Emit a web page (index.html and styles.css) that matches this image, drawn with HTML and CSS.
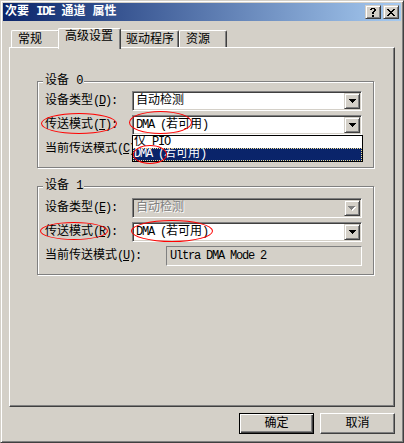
FILE: index.html
```html
<!DOCTYPE html>
<html>
<head>
<meta charset="utf-8">
<link rel="stylesheet" href="styles.css">
</head>
<body>
<div class="window">
  <div class="titlebar">
    <span class="title">次要 <span class="lat">IDE</span> 通道 属性</span>
    <div class="caption-btns">
      <span class="cbtn"><svg width="6" height="9" viewBox="0 0 6 9" shape-rendering="crispEdges"><path d="M1 0h4v1H1zM0 1h2v1H0zM4 1h2v2H4zM3 3h2v1H3zM2 4h2v2H2zM2 7h2v2H2z" fill="#000"/></svg></span>
      <span class="cbtn"><svg width="8" height="7" viewBox="0 0 8 7" shape-rendering="crispEdges"><path d="M0 0h2v1H0zM6 0h2v1H6zM1 1h2v1H1zM5 1h2v1H5zM2 2h4v1H2zM3 3h2v1H3zM2 4h4v1H2zM1 5h2v1H1zM5 5h2v1H5zM0 6h2v1H0zM6 6h2v1H6z" fill="#000"/></svg></span>
    </div>
  </div>

  <div class="tabs">
    <div class="tab t1">常规</div>
    <div class="tab t2 active">高级设置</div>
    <div class="tab t3">驱动程序</div>
    <div class="tab t4">资源</div>
  </div>

  <div class="panel">
    <div class="group g0">
      <div class="group-title">设备 <span class="lat">0</span></div>
      <div class="row first">
        <span class="label">设备类型<span class="lat">(<u>D</u>):</span></span>
        <div class="combo">
          <span class="combo-text">自动检测</span>
          <span class="combo-btn"><svg width="7" height="4" viewBox="0 0 7 4" shape-rendering="crispEdges"><path d="M0 0h7v1H0zM1 1h5v1H1zM2 2h3v1H2zM3 3h1v1H3z" fill="#000"/></svg></span>
        </div>
      </div>
      <div class="row">
        <span class="label">传送模式<span class="lat">(<u>T</u>):</span></span>
        <div class="combo open">
          <span class="combo-text"><span class="lat">DMA (</span>若可用<span class="lat">)</span></span>
          <span class="combo-btn"><svg width="7" height="4" viewBox="0 0 7 4" shape-rendering="crispEdges"><path d="M0 0h7v1H0zM1 1h5v1H1zM2 2h3v1H2zM3 3h1v1H3z" fill="#000"/></svg></span>
          <div class="droplist">
            <div class="item">仅<span class="lat"> PIO</span></div>
            <div class="item selected"><span class="lat">DMA (</span>若可用<span class="lat">)</span></div>
          </div>
        </div>
      </div>
      <div class="row">
        <span class="label clipped">当前传送模式<span class="lat">(<u>C</u>):</span></span>
        <div class="field"></div>
      </div>
    </div>

    <div class="group g1">
      <div class="group-title">设备 <span class="lat">1</span></div>
      <div class="row first">
        <span class="label">设备类型<span class="lat">(<u>E</u>):</span></span>
        <div class="combo disabled">
          <span class="combo-text">自动检测</span>
          <span class="combo-btn"><svg width="8" height="5" viewBox="0 0 8 5" shape-rendering="crispEdges"><path d="M1 1h7v1H1zM2 2h5v1H2zM3 3h3v1H3zM4 4h1v1H4z" fill="#fff"/><path d="M0 0h7v1H0zM1 1h5v1H1zM2 2h3v1H2zM3 3h1v1H3z" fill="#808080"/></svg></span>
        </div>
      </div>
      <div class="row">
        <span class="label">传送模式<span class="lat">(<u>R</u>):</span></span>
        <div class="combo">
          <span class="combo-text"><span class="lat">DMA (</span>若可用<span class="lat">)</span></span>
          <span class="combo-btn"><svg width="7" height="4" viewBox="0 0 7 4" shape-rendering="crispEdges"><path d="M0 0h7v1H0zM1 1h5v1H1zM2 2h3v1H2zM3 3h1v1H3z" fill="#000"/></svg></span>
        </div>
      </div>
      <div class="row">
        <span class="label">当前传送模式<span class="lat">(<u>U</u>):</span></span>
        <div class="field"><span class="lat">Ultra DMA Mode 2</span></div>
      </div>
    </div>
  </div>

  <div class="buttons">
    <div class="btn default">确定</div>
    <div class="btn">取消</div>
  </div>

  <div class="ell e1"></div>
  <div class="ell e2"></div>
  <div class="ell e3"></div>
  <div class="ell e4"></div>
  <div class="ell e5"></div>
</div>
</body>
</html>
```

FILE: styles.css
```css
* { box-sizing: border-box; }

html, body {
  margin: 0;
  padding: 0;
  background: #D4D0C8;
}

body {
  font-family: "Liberation Mono", "Noto Sans CJK SC", monospace;
  font-size: 12px;
  line-height: 14px;
  color: #000;
}

.lat { letter-spacing: -1.2px; }
u { text-decoration: underline; }

.window {
  position: relative;
  width: 404px;
  height: 443px;
  border: 1px solid;
  border-color: #D4D0C8 #404040 #404040 #D4D0C8;
  box-shadow: inset 1px 1px #fff, inset -1px -1px #808080;
  padding: 2px;
  display: flex;
  flex-direction: column;
  background: #D4D0C8;
  overflow: hidden;
}

/* title bar */
.titlebar {
  flex: none;
  height: 18px;
  display: flex;
  align-items: center;
  justify-content: space-between;
  padding: 0 2px;
  background: linear-gradient(to right, #0A246A, #A6CAF0);
}
.title {
  color: #fff;
  font-weight: bold;
  white-space: pre;
}
.caption-btns { display: flex; gap: 2px; }
.cbtn {
  width: 16px;
  height: 14px;
  background: #D4D0C8;
  border: 1px solid;
  border-color: #D4D0C8 #404040 #404040 #D4D0C8;
  box-shadow: inset 1px 1px #fff, inset -1px -1px #808080;
  display: flex;
  align-items: center;
  justify-content: center;
}
.cbtn svg { display: block; }

/* tabs */
.tabs {
  flex: none;
  height: 19px;
  margin: 7px 6px 0;
  padding-left: 2px;
  display: flex;
  align-items: flex-end;
}
.tab {
  height: 17px;
  padding: 2px 0 0 6px;
  background: #D4D0C8;
  border-top: 1px solid #fff;
  border-left: 1px solid #fff;
  border-right: 1px solid #404040;
  box-shadow: inset -1px 0 #808080;
  border-radius: 2px 2px 0 0;
  white-space: nowrap;
}
.tab.active {
  height: 21px;
  margin: 0 -2px -2px;
  padding: 1px 0 0 6px;
  position: relative;
  z-index: 1;
}
.t1 { width: 49px; }
.t2 { width: 63px; }
.t3 { width: 60px; }
.t4 { width: 48px; }

/* panel */
.panel {
  flex: none;
  height: 360px;
  margin: 0 6px;
  background: #D4D0C8;
  border: 1px solid;
  border-color: #fff #404040 #404040 #fff;
  box-shadow: inset -1px -1px #808080;
  padding: 33px 0 0 27px;
  display: flex;
  flex-direction: column;
}

.group {
  width: 337px;
  border: 1px solid #808080;
  box-shadow: inset 1px 1px #fff, 1px 1px #fff;
  padding: 0 11px 8px 7px;
  display: flex;
  flex-direction: column;
}
.g1 { margin-top: 18px; }

.group-title {
  align-self: flex-start;
  height: 14px;
  margin: -8px 0 0 -2px;
  padding: 0 2px;
  background: #D4D0C8;
  white-space: pre;
}

.row {
  height: 20px;
  margin-top: 4px;
  display: flex;
  align-items: center;
  justify-content: space-between;
}
.g0 .row.first { margin-top: 3px; }
.g1 .row.first { margin-top: 5px; }

.label { white-space: nowrap; }
.label.clipped {
  width: 87px;
  flex: none;
  overflow: hidden;
}

/* combo box */
.combo {
  position: relative;
  width: 230px;
  height: 20px;
  background: #fff;
  border: 1px solid;
  border-color: #808080 #fff #fff #808080;
  box-shadow: inset 1px 1px #404040, inset -1px -1px #D4D0C8;
  padding: 1px;
  display: flex;
  align-items: center;
}
.combo-text {
  flex: 1;
  padding-left: 2px;
  white-space: nowrap;
}
.combo-btn {
  width: 16px;
  height: 16px;
  background: #D4D0C8;
  border: 1px solid;
  border-color: #D4D0C8 #404040 #404040 #D4D0C8;
  box-shadow: inset 1px 1px #fff, inset -1px -1px #808080;
  display: flex;
  align-items: center;
  justify-content: center;
}
.combo-btn svg { display: block; }

.combo.disabled { background: #D4D0C8; }
.combo.disabled .combo-text {
  color: #808080;
  text-shadow: 1px 1px #fff;
}

/* open drop-down list */
.droplist {
  position: absolute;
  top: calc(100% + 1px);
  left: -1px;
  width: 231px;
  background: #fff;
  border: 1px solid #000;
  z-index: 3;
}
.item {
  height: 12px;
  line-height: 12px;
  padding-left: 1px;
  white-space: nowrap;
  overflow: hidden;
}
.item.selected {
  height: 13px;
  line-height: 13px;
  background: #0A246A;
  color: #fff;
  outline: 1px dotted #F0E090;
  outline-offset: -1px;
}

/* read-only field */
.field {
  width: 196px;
  height: 20px;
  border: 1px solid;
  border-color: #808080 #fff #fff #808080;
  padding-left: 3px;
  display: flex;
  align-items: center;
  white-space: nowrap;
}

/* dialog buttons */
.buttons {
  flex: none;
  display: flex;
  justify-content: flex-end;
  gap: 6px;
  margin: 6px 6px 0 0;
}
.btn {
  width: 75px;
  height: 21px;
  display: flex;
  align-items: center;
  justify-content: center;
  border: 1px solid;
  border-color: #fff #404040 #404040 #fff;
  box-shadow: inset -1px -1px #808080;
}
.btn.default {
  border-color: #000;
  box-shadow: inset 1px 1px #fff, inset -1px -1px #404040, inset -2px -2px #808080;
}

/* red annotation ellipses */
.ell {
  position: absolute;
  border: 1px solid #f00;
  border-radius: 50%;
  z-index: 5;
  pointer-events: none;
}
.e1 { left: 40px; top: 112px; width: 76px; height: 21px; }
.e2 { left: 128px; top: 110px; width: 63px; height: 23px; }
.e3 { left: 132px; top: 144px; width: 34px; height: 19px; }
.e4 { left: 39px; top: 221px; width: 68px; height: 18px; }
.e5 { left: 130px; top: 219px; width: 82px; height: 22px; }
```
